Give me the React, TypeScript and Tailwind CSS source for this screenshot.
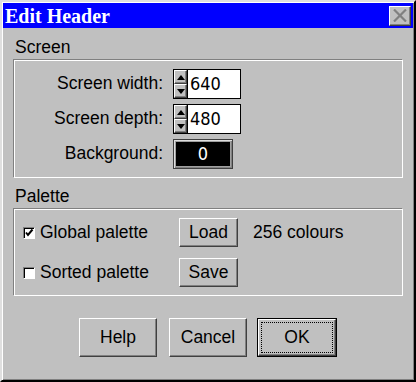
import React from "react";

const sans = { fontFamily: '"Liberation Sans", Arial, sans-serif' };
const narrow = { fontFamily: '"Liberation Sans Narrow", "DejaVu Sans Condensed", "Liberation Sans", sans-serif' };

function Raised({ children, className = "" }: { children?: React.ReactNode; className?: string }) {
  return (
    <div
      className={
        "bg-[#c0c0c0] border border-t-white border-l-white border-r-[#404040] border-b-[#404040] shadow-[inset_-1px_-1px_0_#808080] " +
        className
      }
    >
      {children}
    </div>
  );
}

function Spinner({ value }: { value: string }) {
  return (
    <div className="flex h-[30px] w-[68px] border border-black">
      <div className="flex w-[14px] flex-col border-r border-black">
        <Raised className="flex h-[14px] items-center justify-center">
          <svg width="8" height="5" viewBox="0 0 8 5">
            <polygon points="4,0 8,5 0,5" fill="#000" />
          </svg>
        </Raised>
        <Raised className="flex flex-1 items-center justify-center">
          <svg width="8" height="5" viewBox="0 0 8 5">
            <polygon points="0,0 8,0 4,5" fill="#000" />
          </svg>
        </Raised>
      </div>
      <div className="flex flex-1 items-center bg-white pl-[2px] text-[18px] leading-none text-black" style={narrow}>
        {value}
      </div>
    </div>
  );
}

function Check({ checked }: { checked: boolean }) {
  return (
    <div className="flex h-[12px] w-[12px] items-center justify-center border border-t-[#808080] border-l-[#808080] border-r-white border-b-white bg-white shadow-[inset_1px_1px_0_#000]">
      {checked && (
        <svg width="10" height="10" viewBox="0 0 10 10">
          <polyline points="2,4.5 4,7 8.5,1.5" fill="none" stroke="#000" strokeWidth="2" />
        </svg>
      )}
    </div>
  );
}

export default function App() {
  return (
    <div
      className="flex h-[382px] w-[416px] flex-col border-2 border-t-[#dfdfdf] border-l-[#dfdfdf] border-r-black border-b-black bg-[#c0c0c0] p-px shadow-[inset_1px_1px_0_#fff,inset_-1px_-1px_0_#808080] text-black"
      style={sans}
    >
      {/* Title bar */}
      <div className="flex h-[25px] items-center justify-between bg-[#0000ff] pl-[2px] pr-[2px]">
        <span
          className="text-[20px] font-bold leading-none text-white"
          style={{ fontFamily: '"Liberation Serif", "Times New Roman", serif' }}
        >
          Edit Header
        </span>
        <Raised className="flex h-[20px] w-[22px] items-center justify-center">
          <svg width="14" height="13" viewBox="0 0 14 13">
            <path d="M1 0.5 L13 12.5 M13 0.5 L1 12.5" stroke="#808080" strokeWidth="2.2" />
          </svg>
        </Raised>
      </div>

      {/* Body */}
      <div className="flex flex-1 flex-col px-[10px] text-[17.5px]">
        <div className="h-[31px] pt-[9px] pl-[2px] leading-[20px]">Screen</div>
        <div className="flex flex-col gap-[5px] border border-t-[#808080] border-l-[#808080] border-r-white border-b-white pt-[9px] pb-[8px] shadow-[inset_1px_1px_0_#fff]">
          <div className="flex h-[30px] items-center">
            <div className="w-[149px] text-right leading-none">Screen width:</div>
            <div className="ml-[10px]">
              <Spinner value="640" />
            </div>
          </div>
          <div className="flex h-[30px] items-center">
            <div className="w-[149px] text-right leading-none">Screen depth:</div>
            <div className="ml-[10px]">
              <Spinner value="480" />
            </div>
          </div>
          <div className="flex h-[30px] items-center">
            <div className="w-[149px] text-right leading-none">Background:</div>
            <div className="ml-[10px] flex h-[30px] w-[60px] items-center justify-center border border-[#404040] bg-black shadow-[inset_1px_1px_0_#dfdfdf,inset_-1px_-1px_0_#808080,inset_2px_2px_0_#a0a0a0,inset_-2px_-2px_0_#a0a0a0]">
              <span className="text-[18px] leading-none text-white" style={narrow}>
                0
              </span>
            </div>
          </div>
        </div>

        <div className="h-[30px] pt-[8px] pl-[2px] leading-[20px]">Palette</div>
        <div className="flex flex-col gap-[11px] border border-t-[#808080] border-l-[#808080] border-r-white border-b-white pt-[9px] pb-[8px] pl-[9px] shadow-[inset_1px_1px_0_#fff]">
          <div className="flex h-[29px] items-center">
            <div className="flex w-[156px] items-center gap-[5px]">
              <Check checked />
              <span className="leading-none">Global palette</span>
            </div>
            <Raised className="flex h-[29px] w-[59px] items-center justify-center">
              <span className="leading-none">Load</span>
            </Raised>
            <span className="ml-[15px] leading-none">256 colours</span>
          </div>
          <div className="flex h-[29px] items-center">
            <div className="flex w-[156px] items-center gap-[5px]">
              <Check checked={false} />
              <span className="leading-none">Sorted palette</span>
            </div>
            <Raised className="flex h-[29px] w-[59px] items-center justify-center">
              <span className="leading-none">Save</span>
            </Raised>
          </div>
        </div>

        <div className="mt-[22px] flex justify-center">
          <Raised className="flex h-[39px] w-[78px] items-center justify-center">
            <span className="leading-none">Help</span>
          </Raised>
          <Raised className="ml-[12px] flex h-[39px] w-[78px] items-center justify-center">
            <span className="leading-none">Cancel</span>
          </Raised>
          <div className="ml-[10px] h-[39px] w-[80px] border border-black">
            <Raised className="flex h-full w-full items-center justify-center p-[2px]">
              <div className="flex h-full w-full items-center justify-center border border-dotted border-black">
                <span className="leading-none">OK</span>
              </div>
            </Raised>
          </div>
        </div>
      </div>
    </div>
  );
}
